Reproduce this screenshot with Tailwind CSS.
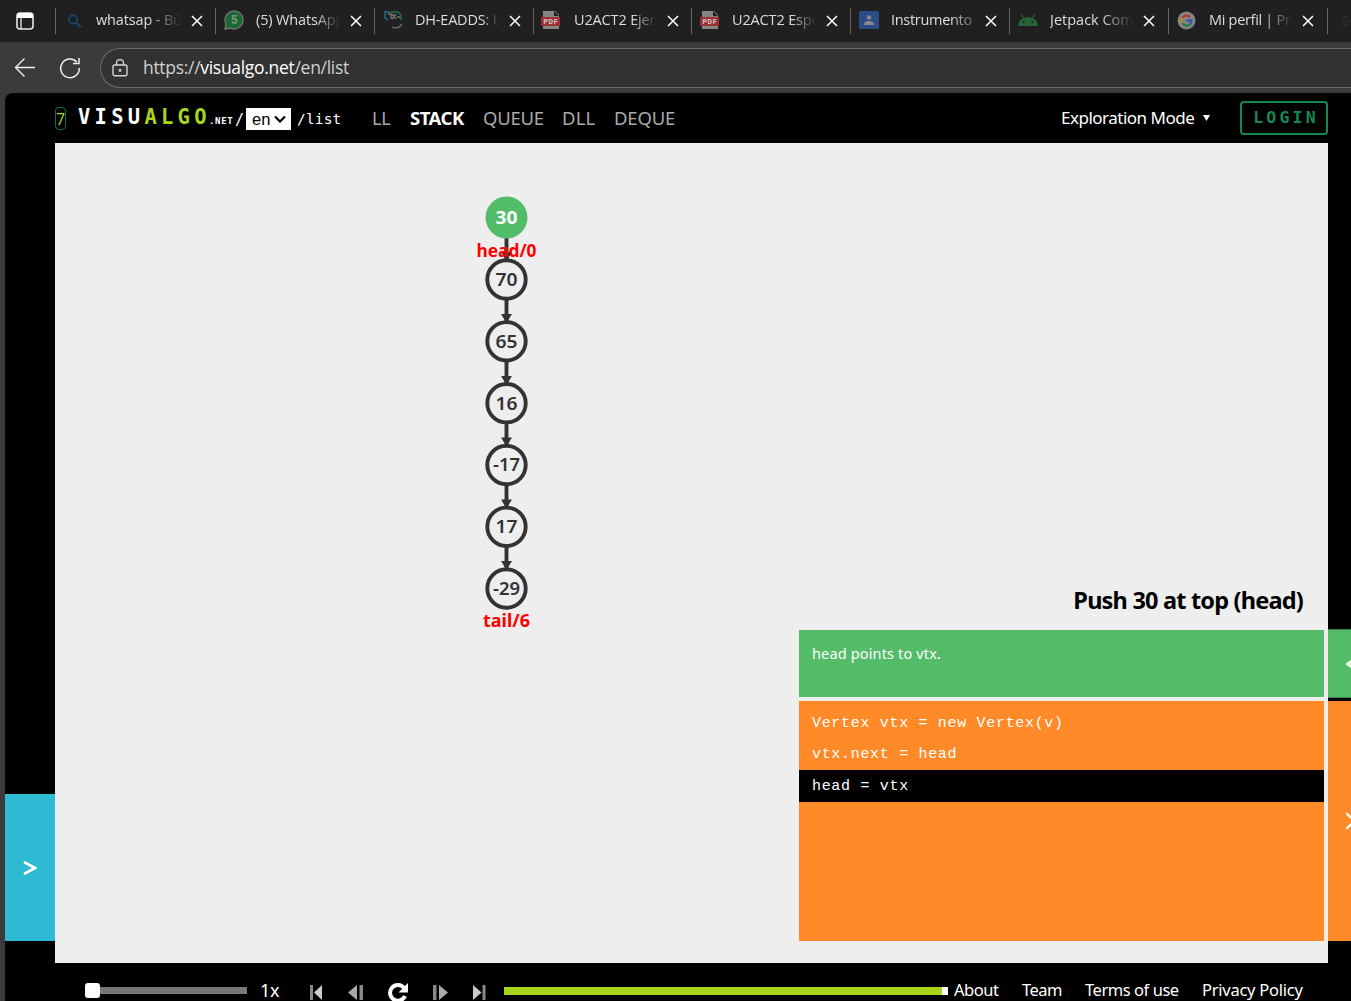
<!DOCTYPE html>
<html lang="en">
<head>
<meta charset="utf-8">
<title>VisuAlgo - Linked List</title>
<script src="https://cdn.jsdelivr.net/npm/@tailwindcss/browser@4"></script>
</head>
<body class="h-[1001px] w-[1351px] overflow-hidden bg-[#3b3b3b] font-['Noto_Sans',sans-serif]">
<div class="flex h-full flex-col">
  <!-- Tab strip -->
  <div id="tabs" class="flex h-[42px] shrink-0 items-center overflow-hidden bg-[#202020] font-['Open_Sans',sans-serif]">
    <div class="flex w-[55px] shrink-0 items-center pl-4">
      <svg width="18" height="18" viewBox="0 0 18 18"><rect x="1" y="1" width="16" height="16" rx="3" fill="none" stroke="#e8e8e8" stroke-width="1.6"/><path d="M1 6V3.500Q1 1 3.500 1h11Q17 1 17 3.500V6z" fill="#fff"/><path d="M5 6v11" stroke="#e8e8e8" stroke-width="1.300"/></svg>
    </div>
    <div class="flex h-[26px] w-[160px] shrink-0 items-center border-l border-[#666]">
      <span class="flex w-10 shrink-0 justify-center pr-1"><svg width="20" height="20" viewBox="0 0 20 20" fill="none" stroke="#1c456d" stroke-width="1.800"><circle cx="9" cy="8.500" r="4.200"/><path d="M12 11.500l5 5" stroke-width="2.200"/></svg></span>
      <span class="w-[86px] overflow-hidden whitespace-nowrap text-[14.500px] leading-[24px] pb-0.5 tracking-[-0.15px] text-[#ddd] mask-r-from-60% mask-r-to-100%">whatsap - Búsqueda</span>
      <svg class="ml-[9px]" width="12" height="12" stroke="#fff" stroke-width="1.500"><path d="M1 1l10 10M11 1L1 11"/></svg>
    </div>
    <div class="flex h-[26px] w-[159px] shrink-0 items-center border-l border-[#666]">
      <span class="flex w-10 shrink-0 justify-center pr-1 pb-0.5"><svg width="20" height="20" viewBox="0 0 20 20"><path d="M1 19l1-5a9 9 0 1 1 4 4z" fill="#17692f" stroke="#707070" stroke-width="1.400"/><text x="10.300" y="14.300" text-anchor="middle" font-size="12" font-weight="700" font-family="Roboto" fill="#8a8a8a">5</text></svg></span>
      <span class="w-[84px] overflow-hidden whitespace-nowrap text-[14.500px] leading-[24px] pb-0.5 tracking-[-0.15px] text-[#ddd] mask-r-from-70% mask-r-to-100%">(5) WhatsApp</span>
      <svg class="ml-[10px]" width="12" height="12" stroke="#fff" stroke-width="1.500"><path d="M1 1l10 10M11 1L1 11"/></svg>
    </div>
    <div class="flex h-[26px] w-[159px] shrink-0 items-center border-l border-[#666]">
      <span class="flex w-10 shrink-0 justify-center pr-1 pb-0.5"><svg width="20" height="20" viewBox="0 0 20 20" fill="none"><path d="M1 2h6M2 2v6l3 2" stroke="#285a7a" stroke-width="1.800"/><path d="M8 2h7l3 3v5" stroke="#256044" stroke-width="1.800"/><path d="M5 4h3v5M9 4l4 5M13 4l-4 5M14 7h3" stroke="#777" stroke-width="1.300"/><path d="M9 17q6 3 10-3" stroke="#666" stroke-width="1.500"/></svg></span>
      <span class="w-[84px] overflow-hidden whitespace-nowrap text-[14.500px] leading-[24px] pb-0.5 tracking-[-0.2px] text-[#ddd] mask-r-from-80% mask-r-to-100%">DH-EADDS: U2</span>
      <svg class="ml-[10px]" width="12" height="12" stroke="#fff" stroke-width="1.500"><path d="M1 1l10 10M11 1L1 11"/></svg>
    </div>
    <div class="flex h-[26px] w-[158px] shrink-0 items-center border-l border-[#666]">
      <span class="flex w-10 shrink-0 justify-start pb-0.5 pl-[7px]"><svg width="20" height="20" viewBox="0 0 20 20"><path d="M2 1h12l4 4v14H2z" fill="#858585"/><path d="M13 1v5h5z" fill="#202020"/><rect x="0" y="7" width="19" height="9" fill="#9e3034"/><text x="9.500" y="14" text-anchor="middle" font-size="7" textLength="14" font-weight="700" font-family="Roboto" fill="#ccc">PDF</text></svg></span>
      <span class="w-[83px] overflow-hidden whitespace-nowrap text-[14.500px] leading-[24px] pb-0.5 tracking-[-0.15px] text-[#ddd] mask-r-from-70% mask-r-to-100%">U2ACT2 Ejercicio</span>
      <svg class="ml-[10px]" width="12" height="12" stroke="#fff" stroke-width="1.500"><path d="M1 1l10 10M11 1L1 11"/></svg>
    </div>
    <div class="flex h-[26px] w-[159px] shrink-0 items-center border-l border-[#666]">
      <span class="flex w-10 shrink-0 justify-start pb-0.5 pl-[8px]"><svg width="20" height="20" viewBox="0 0 20 20"><path d="M2 1h12l4 4v14H2z" fill="#858585"/><path d="M13 1v5h5z" fill="#202020"/><rect x="0" y="7" width="19" height="9" fill="#9e3034"/><text x="9.500" y="14" text-anchor="middle" font-size="7" textLength="14" font-weight="700" font-family="Roboto" fill="#ccc">PDF</text></svg></span>
      <span class="w-[84px] overflow-hidden whitespace-nowrap text-[14.500px] leading-[24px] pb-0.5 tracking-[-0.15px] text-[#ddd] mask-r-from-70% mask-r-to-100%">U2ACT2 Especif</span>
      <svg class="ml-[10px]" width="12" height="12" stroke="#fff" stroke-width="1.500"><path d="M1 1l10 10M11 1L1 11"/></svg>
    </div>
    <div class="flex h-[26px] w-[159px] shrink-0 items-center border-l border-[#666]">
      <span class="flex w-10 shrink-0 justify-start pb-0.5 pl-[8px]"><svg width="20" height="18" viewBox="0 0 20 18"><rect width="20" height="18" rx="1.500" fill="#2b4d87"/><circle cx="10" cy="6.500" r="2.200" fill="#888"/><path d="M5 14q0-4 5-4t5 4z" fill="#888"/></svg></span>
      <span class="w-[84px] overflow-hidden whitespace-nowrap text-[14.500px] leading-[24px] pb-0.5 tracking-[-0.3px] text-[#ddd] mask-r-from-70% mask-r-to-110%">Instrumento</span>
      <svg class="ml-[10px]" width="12" height="12" stroke="#fff" stroke-width="1.500"><path d="M1 1l10 10M11 1L1 11"/></svg>
    </div>
    <div class="flex h-[26px] w-[159px] shrink-0 items-center border-l border-[#666]">
      <span class="flex w-10 shrink-0 justify-start pb-0.5 pl-[8px]"><svg width="20" height="14" viewBox="0 0 20 14"><path d="M0 13q0-8 10-9q10 1 10 9z" fill="#276238"/><path d="M3 1l3 5M17 1l-3 5" stroke="#276238" stroke-width="1.300"/><circle cx="5.500" cy="9" r="1" fill="#202020"/><circle cx="14.500" cy="9" r="1" fill="#202020"/></svg></span>
      <span class="w-[84px] overflow-hidden whitespace-nowrap text-[14.500px] leading-[24px] pb-0.5 tracking-[0px] text-[#ddd] mask-r-from-60% mask-r-to-100%">Jetpack Compose</span>
      <svg class="ml-[9px]" width="12" height="12" stroke="#fff" stroke-width="1.500"><path d="M1 1l10 10M11 1L1 11"/></svg>
    </div>
    <div class="flex h-[26px] w-[159px] shrink-0 items-center border-l border-[#666]">
      <span class="flex w-10 shrink-0 justify-start pb-0.5 pl-[8px]"><svg width="19" height="19" viewBox="0 0 19 19" fill="none" stroke-width="2.300"><circle cx="9.500" cy="9.500" r="9" fill="#858585"/><path d="M13 6A5 5 0 0 0 5.200 7" stroke="#b8332b"/><path d="M5.200 7a5 5 0 0 0 0 5" stroke="#b59324"/><path d="M5.200 12a5 5 0 0 0 7.500 1.500" stroke="#277b3e"/><path d="M12.700 13.500a5 5 0 0 0 1.800-4H9.500" stroke="#2c5cac"/></svg></span>
      <span class="w-[84px] overflow-hidden whitespace-nowrap text-[14.500px] leading-[24px] pb-0.5 tracking-[-0.3px] text-[#ddd] mask-r-from-65% mask-r-to-100%">Mi perfil | Programa</span>
      <svg class="ml-[9px]" width="12" height="12" stroke="#fff" stroke-width="1.500"><path d="M1 1l10 10M11 1L1 11"/></svg>
    </div>
    <div class="flex h-[26px] w-[24px] shrink-0 items-center border-l border-[#666] pl-3">
      <svg width="12" height="12" fill="none" stroke="#2c2c2c" stroke-width="1.500"><circle cx="5" cy="4" r="2.500"/><path d="M2 10h6l3-6"/></svg>
    </div>
  </div>

  <!-- Address bar -->
  <div class="flex h-[51px] shrink-0 items-center border-t border-[#373737]">
    <svg class="ml-[14px] shrink-0" width="22" height="20" fill="none" stroke="#f0f0f0" stroke-width="1.400"><path d="M21 9.500H2M10.500 .5L1.500 9.500l9 9"/></svg>
    <svg class="ml-[23px] shrink-0" width="22" height="22" fill="none" stroke="#f0f0f0" stroke-width="1.500"><path d="M17.800 5A9.300 9.300 0 1 0 20.300 11M20 1v5.500h-6"/></svg>
    <div class="ml-[19px] flex h-10 flex-1 items-center rounded-l-full border border-r-0 border-[#6a6a6a] bg-[#323232] pl-[11px]">
      <svg width="16" height="19" fill="none" stroke="#d5d5d5" stroke-width="1.400"><rect x="1" y="6" width="14" height="10.800" rx="2"/><path d="M4.500 6V4a3.500 3.500 0 0 1 7 0v2"/><circle cx="8" cy="11.500" r=".7" fill="#d5d5d5"/></svg>
      <span id="url" class="ml-[15px] pb-0.5 font-['Open_Sans',sans-serif] text-[17.500px] tracking-[-0.3px] text-[#cfcfcf]">https://<span class="text-white">visualgo.net</span>/en/list</span>
    </div>
  </div>

  <!-- Page -->
  <div class="ml-[5px] flex h-[908px] flex-col overflow-hidden rounded-tl-lg bg-black text-white">
    <header class="flex h-[50px] shrink-0 items-center pr-[23px] pl-[50px]">
      <span class="mt-px flex h-[23px] w-[11px] items-center justify-center rounded border border-[#176b49] font-['Open_Sans'] text-[16px] text-[#a7d51b]">7</span>
      <div class="flex w-[169px] shrink-0 items-baseline pt-0.5 pl-3 leading-[28px]">
        <span class="w-[129px] shrink-0 font-['DejaVu_Sans_Mono',monospace] text-[20.500px] font-bold tracking-[4.250px] whitespace-nowrap">VISU<span class="text-[#a7d51b]">ALGO</span></span>
        <span class="ml-0.5 w-[26px] shrink-0 font-['DejaVu_Sans_Mono',monospace] text-[9px] font-bold tracking-[0.7px]">.NET</span>
      </div>
      <span class="w-[11px] pt-1 font-['DejaVu_Sans_Mono',monospace] text-[15px]">/</span>
      <span class="mt-[2px] flex h-[22px] w-[45px] items-center gap-1 bg-white pl-1.5 font-['Liberation_Sans',sans-serif] text-[16.500px] text-black">en<svg width="12" height="8" fill="none" stroke="#000" stroke-width="2.200"><path d="M1 1.500l5 5 5-5"/></svg></span>
      <span class="ml-[6px] w-[74px] pt-1 font-['DejaVu_Sans_Mono',monospace] text-[14.500px] tracking-[0.150px]">/list</span>
      <nav class="flex items-center pl-px text-[18px] whitespace-nowrap text-[#aaa]">
        <span class="w-[38px] text-[18px] tracking-[-0.2px]">LL</span>
        <span class="w-[73px] text-[18.500px] font-bold tracking-[-0.5px] text-white">STACK</span>
        <span class="w-[79px] text-[18.500px] tracking-[-0.250px]">QUEUE</span>
        <span class="w-[52px] text-[18.500px] tracking-[0.2px]">DLL</span>
        <span class="text-[18.500px] tracking-[-0.2px]">DEQUE</span>
      </nav>
      <span class="ml-auto flex w-[179px] items-center text-[17px] tracking-[-0.5px] whitespace-nowrap"><span class="w-[142px]">Exploration Mode</span><svg width="7" height="6" fill="#fff"><path d="M0 0h7L3.500 6z"/></svg></span>
      <span class="flex h-[34px] w-[88px] items-center justify-center rounded border-2 border-[#198754] pl-1 font-['DejaVu_Sans_Mono',monospace] text-[16.500px] font-bold tracking-[3.2px] text-[#198754]">LOGIN</span>
    </header>

    <div class="flex h-[820px] shrink-0">
      <div class="flex w-[50px] flex-col justify-end pb-[22px]">
        <div class="flex h-[147px] items-center justify-center bg-[#2fbad3]"><svg width="14" height="14" fill="none" stroke="#fff" stroke-width="2.600"><path d="M1 1l11 6-11 6"/></svg></div>
      </div>

      <main class="relative flex w-[1273px] flex-col items-end justify-end bg-[#eee] pr-1 pb-[22px]">
        <svg class="absolute top-0 left-[401px]" width="100" height="520" font-family="'Noto Sans', sans-serif" text-anchor="middle">
          <g stroke="#333" stroke-width="3.900" fill="none">
            <path d="M50.500 75V445"/>
            <g fill="#eee">
              <circle cx="50.500" cy="136.500" r="19.200"/><circle cx="50.500" cy="198.300" r="19.200"/><circle cx="50.500" cy="260.200" r="19.200"/>
              <circle cx="50.500" cy="322" r="19.200"/><circle cx="50.500" cy="383.800" r="19.200"/><circle cx="50.500" cy="445.500" r="19.200"/>
            </g>
          </g>
          <circle cx="50.500" cy="74.500" r="21" fill="#52bc69"/>
          <path fill="#333" d="M45 109h11l-5.500 9zM45 171h11l-5.500 9zM45 233h11l-5.500 9zM45 294.500h11l-5.500 9zM45 356.500h11l-5.500 9zM45 418h11l-5.500 9z"/>
          <g font-size="18" font-weight="600" fill="#333">
            <text x="50.500" y="81" fill="#fff" font-weight="700" textLength="22" lengthAdjust="spacingAndGlyphs">30</text>
            <text x="50.500" y="143" textLength="22" lengthAdjust="spacingAndGlyphs">70</text>
            <text x="50.500" y="205" textLength="22" lengthAdjust="spacingAndGlyphs">65</text>
            <text x="50.500" y="267" textLength="22" lengthAdjust="spacingAndGlyphs">16</text>
            <text x="50.500" y="328" textLength="27" lengthAdjust="spacingAndGlyphs">-17</text>
            <text x="50.500" y="390" textLength="22" lengthAdjust="spacingAndGlyphs">17</text>
            <text x="50.500" y="452" textLength="27" lengthAdjust="spacingAndGlyphs">-29</text>
          </g>
          <g font-size="18" font-weight="700" fill="#f00">
            <text x="50.500" y="114" textLength="60" lengthAdjust="spacingAndGlyphs">head/0</text>
            <text x="50.500" y="484" textLength="47" lengthAdjust="spacingAndGlyphs">tail/6</text>
          </g>
        </svg>

        <h2 class="mr-[21px] mb-[13px] text-[23.500px] leading-[34px] font-bold tracking-[-0.8px] whitespace-nowrap text-black">Push 30 at top (head)</h2>
        <div class="h-[67px] w-[525px] bg-[#54bc69] pt-[12px] pl-[13px] text-[14.500px] leading-[22px] tracking-[0.15px]">head points to vtx.</div>
        <div class="mt-1 h-[240px] w-[525px] bg-[#ff8a27] pt-[7px] font-['Liberation_Mono','Courier_New',monospace] text-[15px] tracking-[0.680px]">
          <div class="h-[31px] pl-[13px] leading-[32px]">Vertex vtx = new Vertex(v)</div>
          <div class="h-[31px] pl-[13px] leading-[32px]">vtx.next = head</div>
          <div class="h-8 bg-black pl-[13px] leading-[33px]">head = vtx</div>
        </div>
      </main>

      <div class="flex w-[23px] flex-col justify-end gap-[3px] pb-[22px]">
        <div class="flex h-[69px] items-center justify-end overflow-hidden border-y border-[#3a8349] bg-[#54bc69]"><svg width="5" height="14" fill="none" stroke="#fff" stroke-width="2.600"><path d="M12 0L1.500 7l10.500 7"/></svg></div>
        <div class="flex h-[240px] items-center justify-end overflow-hidden bg-[#ff8a27]"><svg width="5" height="18" fill="none" stroke="#fff" stroke-width="2.300"><path d="M0 1l9 8-9 8"/></svg></div>
      </div>
    </div>

    <!-- Playback controls -->
    <footer class="flex h-[54px] shrink-0 items-center pl-20 whitespace-nowrap">
      <span class="size-[15px] rounded-[3px] bg-white"></span><span class="h-[7px] w-[147px] bg-[#777]"></span>
      <span class="ml-[13px] w-[50px] text-[18px] tracking-[-0.2px]">1x</span>
      <svg class="mt-[4px]" width="12" height="15"><path d="M0 0h3v15H0z" fill="#888"/><path d="M12 0v15L4 7.500z" fill="#ccc"/></svg>
      <svg class="mt-[4px] ml-[26px]" width="15" height="15"><path d="M9 0v15L0 7.500z" fill="#aaa"/><path d="M11.500 0H15v15h-3.500z" fill="#888"/></svg>
      <svg class="mt-[5px] ml-[25px]" width="21" height="22" fill="none"><path d="M16 6a7.800 7.800 0 1 0 1 8" stroke="#fff" stroke-width="4"/><path d="M20 1v9.500H10.500z" fill="#fff"/></svg>
      <svg class="mt-[4px] ml-[24px]" width="15" height="15"><path d="M0 0h3.500v15H0z" fill="#888"/><path d="M6 0v15l9-7.500z" fill="#aaa"/></svg>
      <svg class="mt-[4px] ml-[25px]" width="13" height="15"><path d="M0 0v15l8.500-7.500z" fill="#ccc"/><path d="M9.500 0h3v15h-3z" fill="#888"/></svg>
      <span class="ml-[18px] mt-0.5 h-2 w-[438px] bg-[#a7d51b]"></span><span class="mt-0.5 h-2 w-1.5 bg-white"></span>
      <nav class="ml-1.5 flex text-[16.500px]">
        <span class="w-[68px] tracking-[-0.45px]">About</span>
        <span class="w-[63px] tracking-[-0.5px]">Team</span>
        <span class="w-[117px] tracking-[-0.45px]">Terms of use</span>
        <span class="tracking-[-0.25px]">Privacy Policy</span>
      </nav>
    </footer>
  </div>
</div>
</body>
</html>
